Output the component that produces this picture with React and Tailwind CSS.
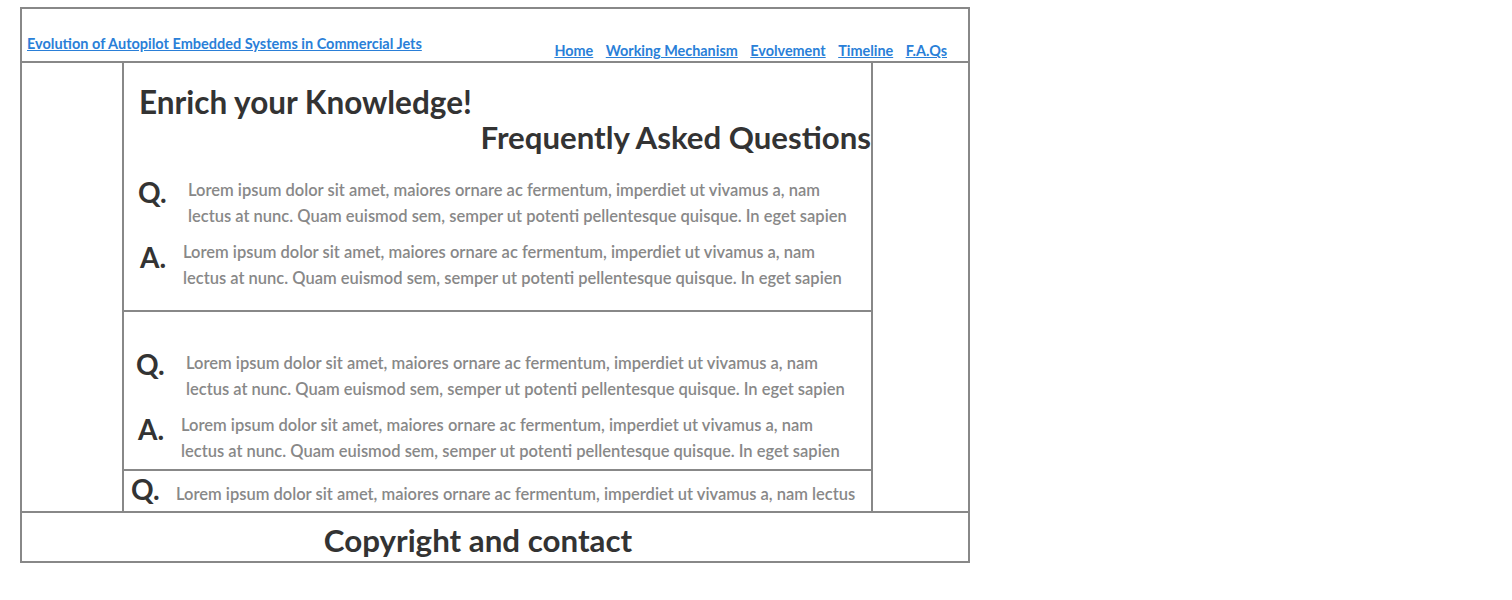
import React from "react";

const L1 = "Lorem ipsum dolor sit amet, maiores ornare ac fermentum, imperdiet ut vivamus a, nam";
const L2 = "lectus at nunc. Quam euismod sem, semper ut potenti pellentesque quisque. In eget sapien";

function QA({ letter, textLeft, labelLeft, labelTop }) {
  return (
    <div className="flex">
      <div className={`${labelLeft} ${labelTop} w-[40px] shrink-0 text-[28px] font-bold leading-none text-[#333]`}>{letter}</div>
      <div className={`${textLeft} text-[16.5px] leading-[26px] text-[#888] font-semibold whitespace-nowrap`}>
        <div>{L1}</div>
        <div>{L2}</div>
      </div>
    </div>
  );
}

export default function App() {
  return (
    <div className="p-[7px_0_0_20px] font-['Lato',sans-serif]">
      <div className="w-[950px] border-2 border-[#888] flex flex-col">
        <header className="h-[54px] border-b-2 border-[#888] flex items-start justify-between">
          <a href="#" className="ml-[5px] mt-[25px] leading-[20px] text-[14.5px] font-bold text-[#2a7fd8] underline">
            Evolution of Autopilot Embedded Systems in Commercial Jets
          </a>
          <nav className="mr-[21px] mt-[32px] leading-[20px] flex gap-[12.5px] text-[14.4px] font-bold text-[#2a7fd8]">
            <a href="#" className="underline">Home</a>
            <a href="#" className="underline">Working Mechanism</a>
            <a href="#" className="underline">Evolvement</a>
            <a href="#" className="underline">Timeline</a>
            <a href="#" className="underline">F.A.Qs</a>
          </nav>
        </header>
        <div className="flex h-[448px]">
          <aside className="w-[102px] border-r-2 border-[#888] shrink-0" />
          <main className="w-[749px] border-r-2 border-[#888] shrink-0 flex flex-col overflow-hidden">
            <section className="h-[249px] shrink-0 border-b-2 border-[#888]">
              <h1 className="ml-[15px] mt-[20px] text-[31.5px] font-bold leading-[38px] text-[#333]">Enrich your Knowledge!</h1>
              <h2 className="text-right text-[31.2px] font-bold leading-[32px] text-[#333]">Frequently Asked Questions</h2>
              <div className="mt-[24px]">
                <QA letter="Q." labelLeft="ml-[14px]" labelTop="mt-[1px]" textLeft="ml-[10px]" />
                <div className="mt-[10px]">
                  <QA letter="A." labelLeft="ml-[16px]" labelTop="mt-[4px]" textLeft="ml-[3px]" />
                </div>
              </div>
            </section>
            <section className="h-[159px] shrink-0 border-b-2 border-[#888]">
              <div className="mt-[38px]">
                <QA letter="Q." labelLeft="ml-[12px]" labelTop="mt-[0px]" textLeft="ml-[10px]" />
                <div className="mt-[10px]">
                  <QA letter="A." labelLeft="ml-[14px]" labelTop="mt-[3px]" textLeft="ml-[3px]" />
                </div>
              </div>
            </section>
            <section className="flex">
              <div className="ml-[7px] mt-[4px] w-[45px] shrink-0 text-[28px] font-bold leading-none text-[#333]">Q.</div>
              <div className="mt-[10px] text-[16.5px] leading-[26px] text-[#888] font-semibold whitespace-nowrap">
                {L1} lectus
              </div>
            </section>
          </main>
          <aside className="flex-1" />
        </div>
        <footer className="h-[50px] border-t-2 border-[#888] flex items-center justify-center pt-[6px]">
          <div className="mr-[34px] text-[31.3px] font-bold text-[#333] leading-[38px]">Copyright and contact</div>
        </footer>
      </div>
    </div>
  );
}
